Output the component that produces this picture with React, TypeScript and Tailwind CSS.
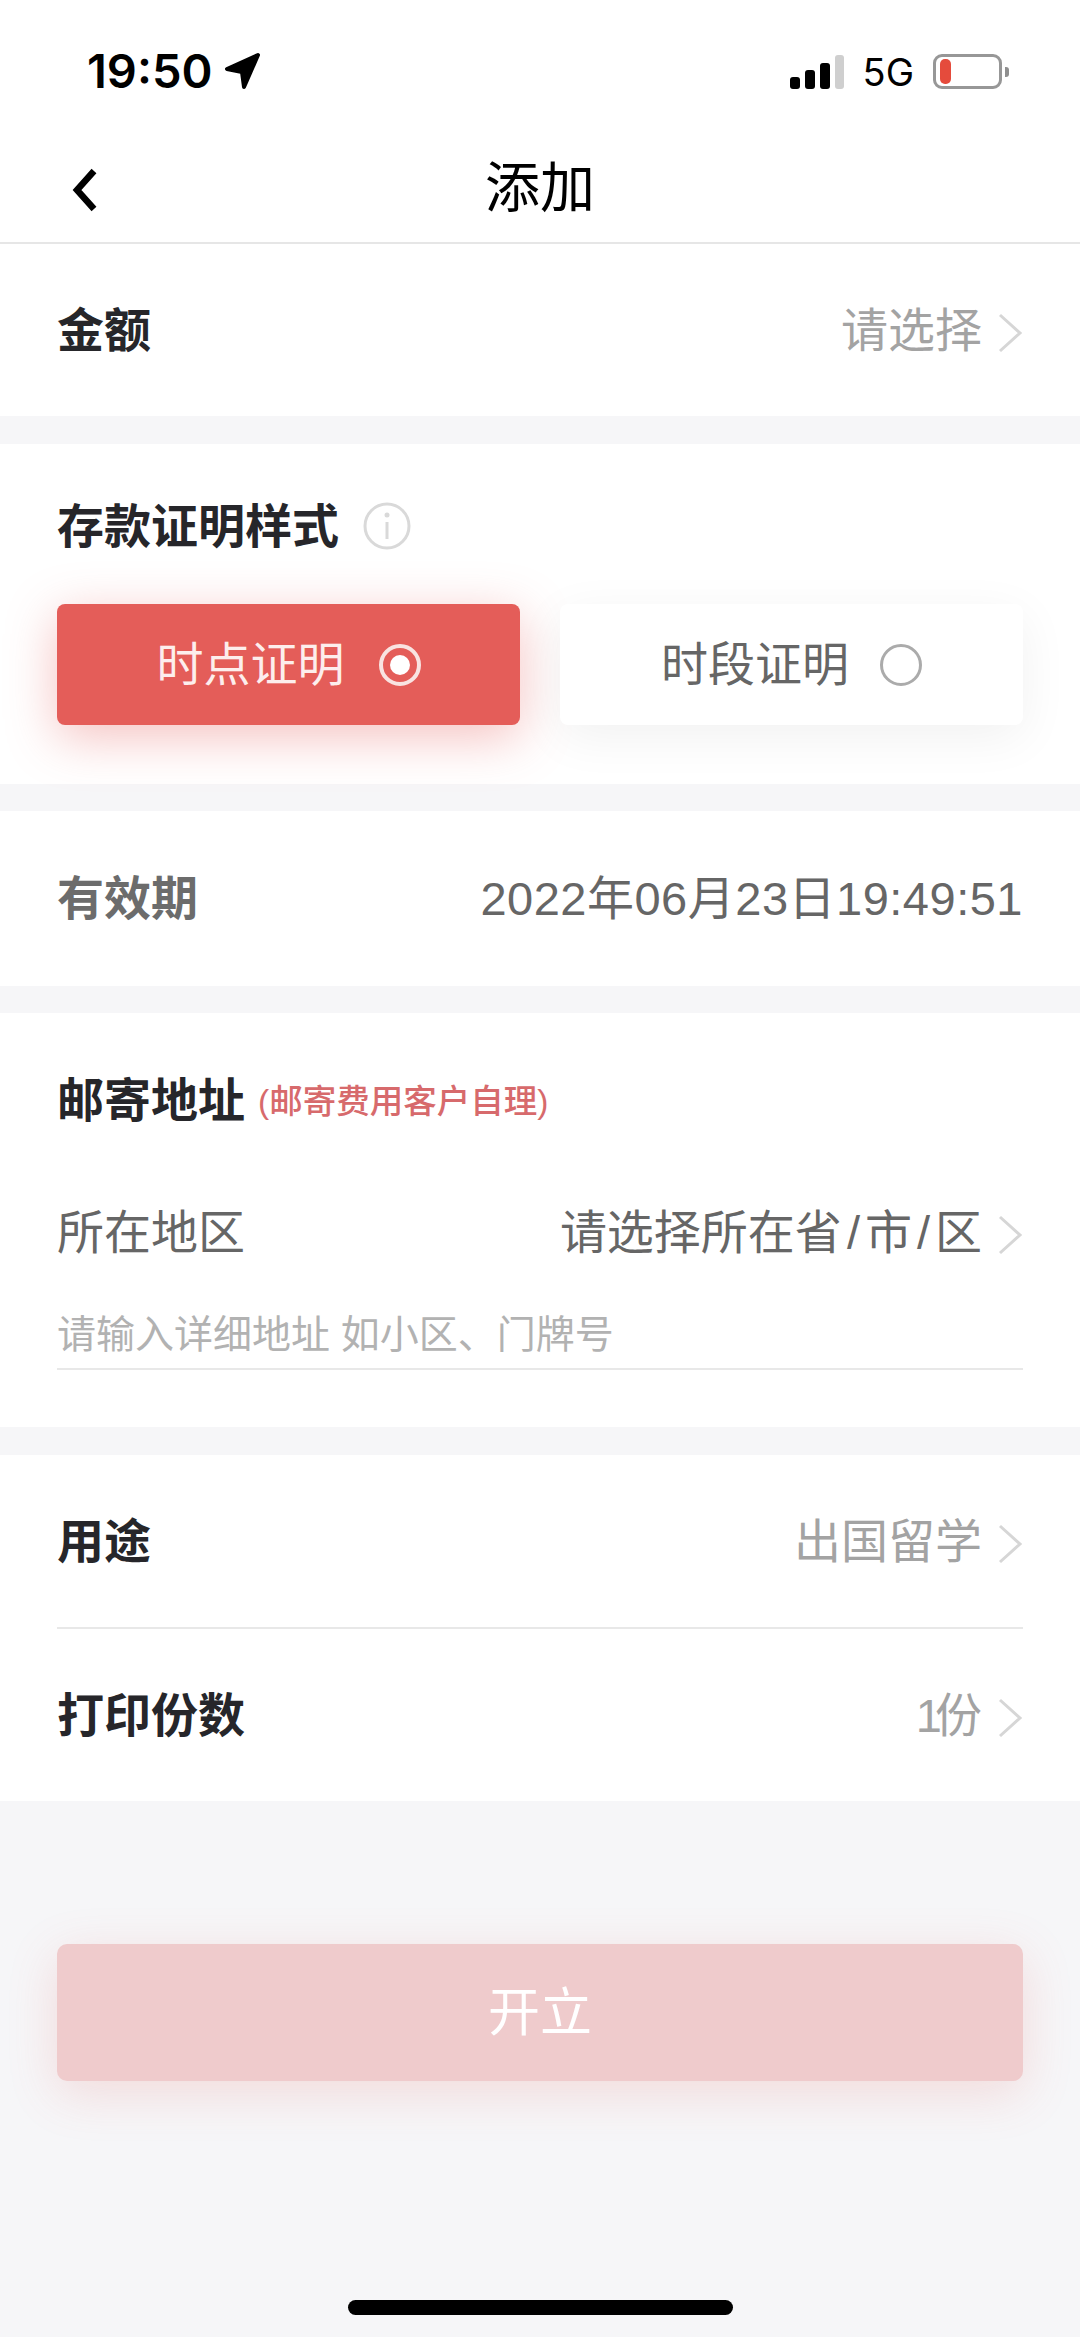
const cjk = "font-['Liberation_Sans','Noto_Sans_CJK_SC',sans-serif]";

function Chevron() {
  return (
    <svg width="26" height="40" viewBox="0 0 26 40" className="ml-[15px] mt-[6px] shrink-0">
      <polyline points="3,2 23,20 3,38" fill="none" stroke="#d6d6d6" strokeWidth="3" />
    </svg>
  );
}

function Radio({ on }: { on: boolean }) {
  return (
    <span
      className={
        on
          ? "ml-[34px] flex h-[42px] w-[42px] items-center justify-center rounded-full border-[4px] border-[#f9e3e1]"
          : "ml-[31px] h-[42px] w-[42px] rounded-full border-[3px] border-[#ababab]"
      }
    >
      {on && <span className="h-[20px] w-[20px] rounded-full bg-white" />}
    </span>
  );
}

function ValueRow({
  label,
  value,
  className,
}: {
  label: string;
  value: React.ReactNode;
  className: string;
}) {
  return (
    <div className={`flex items-center justify-between ${className}`}>
      <span className="text-[47px] font-bold leading-none text-[#26262a]">{label}</span>
      <span className="flex items-center">
        <span className="text-[47px] leading-none text-[#a3a3a3]">{value}</span>
        <Chevron />
      </span>
    </div>
  );
}

export default function App() {
  return (
    <div className={`flex h-[2337px] w-[1080px] flex-col overflow-hidden bg-[#f6f6f8] ${cjk}`}>
      {/* status bar */}
      <div className="flex h-[134px] items-start justify-between bg-white pl-[87px] pr-[71px] pt-[48px]">
        <div className="flex items-center gap-[11px]">
          <span className="font-['Inter',sans-serif] text-[47px] font-semibold leading-[46px] text-black">19:50</span>
          <svg width="37" height="38" viewBox="0 0 37 38">
            <path d="M34 3 L3 17 L18 20 L20 35 Z" fill="black" stroke="black" strokeWidth="4" strokeLinejoin="round" />
          </svg>
        </div>
        <div className="flex items-center pt-[6px]">
          <div className="flex items-end gap-[5px]">
            <span className="h-[12px] w-[10px] rounded-[3px] bg-black" />
            <span className="h-[19px] w-[10px] rounded-[3px] bg-black" />
            <span className="h-[26px] w-[10px] rounded-[3px] bg-black" />
            <span className="h-[34px] w-[9px] rounded-[3px] bg-[#cfcfcf]" />
          </div>
          <span className="ml-[19px] font-['Inter',sans-serif] text-[38px] font-normal leading-[34px] text-black">5G</span>
          <div className="ml-[19px] flex items-center">
            <div className="flex h-[35px] w-[69px] items-center rounded-[9px] border-[3px] border-[#979797] pl-[4px]">
              <span className="h-[25px] w-[11px] rounded-[5px] bg-[#e54b3c]" />
            </div>
            <span className="ml-[3px] h-[10px] w-[4px] rounded-r-[3px] bg-[#8f8f8f]" />
          </div>
        </div>
      </div>

      {/* nav */}
      <div className="relative flex h-[110px] items-center justify-center border-b-[2px] border-[#e6e6e6] bg-white">
        <svg width="32" height="46" viewBox="0 0 32 46" className="absolute left-[69px] top-[33px]">
          <polyline points="25,4 8,23 25,42" fill="none" stroke="black" strokeWidth="6.5" />
        </svg>
        <span className="text-[55px] leading-none text-black">添加</span>
      </div>

      {/* amount */}
      <ValueRow label="金额" value="请选择" className="h-[172px] bg-white px-[57px]" />

      {/* proof style */}
      <div className="mt-[28px] flex h-[340px] flex-col bg-white px-[57px] pt-[58px]">
        <div className="flex h-[48px] items-center">
          <span className="text-[47px] font-bold leading-none text-[#26262a]">存款证明样式</span>
          <svg width="48" height="48" viewBox="0 0 48 48" className="ml-[24px]">
            <circle cx="24" cy="24" r="22" fill="none" stroke="#d9d9d9" strokeWidth="3" />
            <circle cx="24" cy="13" r="2.5" fill="#d9d9d9" />
            <rect x="22.5" y="20" width="3" height="17" fill="#d9d9d9" />
          </svg>
        </div>
        <div className="mt-[54px] flex justify-between">
          <div className="flex h-[121px] w-[463px] items-center justify-center rounded-[8px] bg-[#e45d59] shadow-[0_12px_50px_rgba(228,93,89,0.38)]">
            <span className="text-[47px] leading-none text-[#fdeeed]">时点证明</span>
            <Radio on />
          </div>
          <div className="flex h-[121px] w-[463px] items-center justify-center rounded-[8px] bg-white shadow-[0_12px_50px_rgba(0,0,0,0.06)]">
            <span className="text-[47px] leading-none text-[#666666]">时段证明</span>
            <Radio on={false} />
          </div>
        </div>
      </div>

      {/* validity */}
      <div className="mt-[27px] flex h-[175px] items-center justify-between bg-white px-[57px]">
        <span className="text-[47px] font-semibold leading-none text-[#6c6c6c]">有效期</span>
        <span className="text-[47px] leading-none tracking-[0.5px] text-[#666666]">2022年06月23日19:49:51</span>
      </div>

      {/* address */}
      <div className="mt-[27px] flex h-[414px] flex-col bg-white px-[57px] pt-[64px]">
        <div className="flex h-[46px] items-center">
          <span className="text-[47px] font-bold leading-none text-[#26262a]">邮寄地址</span>
          <span className="ml-[13px] mt-[4px] text-[33.5px] font-medium leading-none text-[#d76a6c]">(邮寄费用客户自理)</span>
        </div>
        <div className="mt-[86px] flex h-[46px] items-center justify-between">
          <span className="text-[47px] leading-none text-[#666666]">所在地区</span>
          <span className="flex items-center">
            <span className="text-[47px] leading-none text-[#666666]">
              请选择所在省<span className="mx-[5px]">/</span>市<span className="mx-[5px]">/</span>区
            </span>
            <Chevron />
          </span>
        </div>
        <div className="mt-[60px] flex h-[55px] items-start border-b-[2px] border-[#e8e8e8]">
          <span className="text-[39px] leading-none text-[#b2b2b2]">请输入详细地址 如小区、门牌号</span>
        </div>
      </div>

      {/* usage */}
      <div className="mt-[28px] flex h-[346px] flex-col bg-white px-[57px]">
        <ValueRow label="用途" value="出国留学" className="h-[174px] border-b-[2px] border-[#e8e8e8]" />
        <ValueRow
          label="打印份数"
          value={
            <>
              <span className="tracking-[-10px]">1</span>
              <span className="ml-[3px]">份</span>
            </>
          }
          className="h-[172px]"
        />
      </div>

      {/* submit */}
      <div className="mt-[143px] flex justify-center">
        <div className="flex h-[137px] w-[966px] items-center justify-center rounded-[10px] bg-[#efcbcc] shadow-[0_12px_50px_rgba(228,93,89,0.18)]">
          <span className="text-[52px] leading-none text-white">开立</span>
        </div>
      </div>

      {/* home indicator */}
      <div className="mt-[219px] flex justify-center">
        <span className="h-[15px] w-[385px] rounded-full bg-black" />
      </div>
    </div>
  );
}
